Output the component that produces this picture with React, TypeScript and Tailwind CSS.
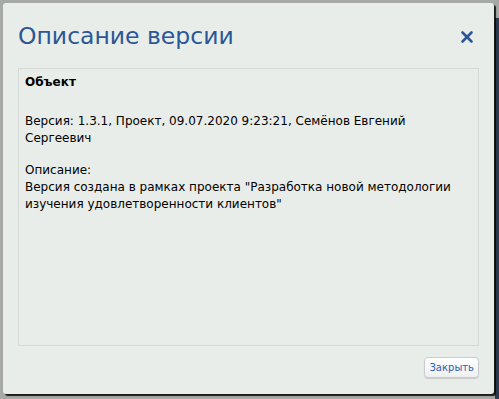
import { X } from 'lucide-react'

export default function App() {
  return (
    <div className="relative h-[399px] w-[499px] overflow-hidden bg-[#a7a9a7] font-['DejaVu_Sans',Verdana,sans-serif]">
      {/* page behind the dialog on the right */}
      <div className="absolute right-0 top-[18px] h-[381px] w-[4px] bg-[#2e3a4e]" />

      <div className="absolute left-[3px] top-[3px] flex h-[391px] w-[491px] flex-col rounded-[3px] bg-[#e9edea] shadow-[2px_2px_1px_rgba(0,0,0,0.85)]">
        <div className="flex h-[65px] items-center justify-between pl-[15px] pr-[18px] pt-[2px]">
          <h1 className="text-[23.5px] leading-none text-[#2b5797]">Описание версии</h1>
          <button type="button" className="text-[#2b5797]">
            <X className="h-[18px] w-[18px]" strokeWidth={3.5} />
          </button>
        </div>

        <div className="mx-[15px] h-[278px] border border-[#d6dad7] px-[6px] pt-[5px] text-[12px] leading-[17px] text-black">
          <div className="font-bold">Объект</div>
          <div className="mt-[22px]">Версия: 1.3.1, Проект, 09.07.2020 9:23:21, Семёнов Евгений Сергеевич</div>
          <div className="mt-[15px]">Описание:</div>
          <div>Версия создана в рамках проекта "Разработка новой методологии изучения удовлетворенности клиентов"</div>
        </div>

        <div className="flex justify-end pr-[15px] pt-[11px]">
          <button
            type="button"
            className="h-[21px] rounded-[4px] border border-[#c9cdd0] bg-gradient-to-b from-white to-[#eef0f0] px-[4px] text-[10px] text-[#2f5fb3] shadow-[0_1px_1px_rgba(0,0,0,0.15)]"
          >
            Закрыть
          </button>
        </div>
      </div>
    </div>
  )
}
